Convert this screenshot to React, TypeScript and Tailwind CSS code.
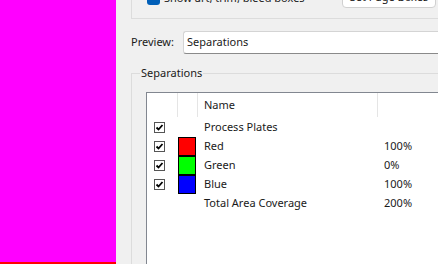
import React from 'react';

const rows = [
  { name: 'Process Plates', checked: true, color: '', value: '' },
  { name: 'Red', checked: true, color: 'bg-[#ff0000]', value: '100%' },
  { name: 'Green', checked: true, color: 'bg-[#00ff00]', value: '0%' },
  { name: 'Blue', checked: true, color: 'bg-[#0000ff]', value: '100%' },
  { name: 'Total Area Coverage', checked: false, color: '', value: '200%' },
];

const Check = () => (
  <div className="w-[11px] h-[11px] border border-[#555] bg-white flex items-center justify-center">
    <svg width="9" height="9" viewBox="0 0 9 9">
      <path d="M1.5 4.5 L3.5 6.5 L7.5 2" stroke="#000" strokeWidth="1.8" fill="none" />
    </svg>
  </div>
);

const App = () => {
  return (
    <div className="flex w-[438px] h-[264px] overflow-hidden bg-[#f0f0f0] text-[11px] text-[#1a1a1a]" style={{ fontFamily: '"Noto Sans", "Open Sans", sans-serif' }}>
      <div className="w-[116px] h-[264px] shrink-0 bg-[#ff00ff] border-b-2 border-[#ff0000]" />
      <div className="flex-1 flex flex-col pl-[15px] min-w-0">
        {/* top group box, mostly scrolled off */}
        <div className="h-[19px] border-l border-b border-[#dcdcdc] flex items-start justify-between pl-[15px] pr-[2px] overflow-hidden">
          <div className="flex items-center gap-[4px] -mt-[10px]">
            <div className="w-[13px] h-[13px] rounded-[3px] bg-[#005fb8]" />
            <span>Show art, trim, bleed boxes</span>
          </div>
          <div className="-mt-[14px] h-[22px] w-[94px] rounded-[4px] border border-[#d0d0d0] bg-white flex items-center justify-center">
            Set Page Boxes
          </div>
        </div>
        {/* preview */}
        <div className="flex items-center mt-[12px] h-[23px]">
          <span className="w-[52px]">Preview:</span>
          <div className="flex-1 h-[23px] rounded-l-[3px] border border-r-0 border-[#d4d4d4] border-b-[#8a8a8a] bg-white flex items-center pl-[3px]">
            Separations
          </div>
        </div>
        {/* separations group */}
        <div className="relative mt-[19px] flex-1 border-l border-t border-[#dcdcdc] pl-[14px] pt-[18px]">
          <span className="absolute -top-[10px] left-[8px] px-[1px] bg-[#f0f0f0] leading-[18px]">Separations</span>
          <div className="h-full border-l border-t border-[#828790] bg-white">
            <div className="flex h-[24px] items-center">
              <div className="w-[31px] h-full border-r border-[#e5e5e5]" />
              <div className="w-[20px] h-full border-r border-[#e5e5e5]" />
              <div className="w-[180px] h-full border-r border-[#e5e5e5] pl-[6px] flex items-center">Name</div>
            </div>
            <div className="pt-[1px]">
              {rows.map((r) => (
                <div key={r.name} className="flex h-[19px] items-center">
                  <div className="w-[31px] pl-[7px] flex items-center">{r.checked && <Check />}</div>
                  <div className="w-[20px] h-full flex items-center">
                    {r.color && <div className={`w-[18px] h-[19px] border border-black ${r.color}`} />}
                  </div>
                  <div className="w-[180px] pl-[6px]">{r.name}</div>
                  <div className="pl-[6px]">{r.value}</div>
                </div>
              ))}
            </div>
          </div>
        </div>
      </div>
    </div>
  );
};

export default App;
